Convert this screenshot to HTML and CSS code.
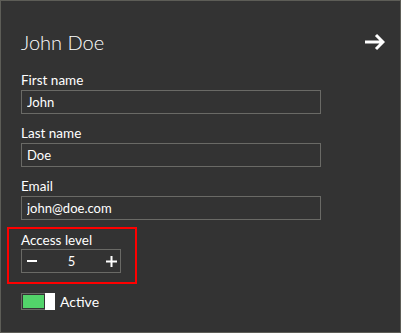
FILE: index.html
```html
<!DOCTYPE html>
<html>
	<head>
		<title>John Doe</title>
		<meta charset="utf-8">
		<link rel="stylesheet" href="styles.css">
	</head>
	<body>
		<div class="page">
			<div class="header">
				<h1 class="title">John Doe</h1>
				<svg class="next" width="20" height="18" viewBox="0 0 20 18">
					<path d="M0 9H18M11 2L18 9L11 16" fill="none" stroke="#fff" stroke-width="3"/>
				</svg>
			</div>

			<div class="field">
				<label for="first">First name</label>
				<input class="box" id="first" type="text" value="John">
			</div>
			<div class="field">
				<label for="last">Last name</label>
				<input class="box" id="last" type="text" value="Doe">
			</div>
			<div class="field">
				<label for="email">Email</label>
				<input class="box" id="email" type="text" value="john@doe.com">
			</div>

			<div class="field marked">
				<label>Access level</label>
				<div class="stepper">
					<button type="button" class="step">
						<svg width="10" height="10" viewBox="0 0 10 10"><path d="M0 5H10" stroke="#fff" stroke-width="2"/></svg>
					</button>
					<span class="value">5</span>
					<button type="button" class="step">
						<svg width="11" height="11" viewBox="0 0 11 11"><path d="M0 5.5H11M5.5 0V11" stroke="#fff" stroke-width="2"/></svg>
					</button>
				</div>
			</div>

			<div class="switch">
				<span class="toggle"><span class="track"><span class="fill"></span></span><span class="thumb"></span></span>
				<span class="switch-label">Active</span>
			</div>
		</div>
	</body>
</html>
```

FILE: styles.css
```css
body,html{margin:0;padding:0;background:#333;}
body{font-family:Lato,"Open Sans",sans-serif;color:#fff;font-size:13px;}

.page{width:401px;height:333px;box-sizing:border-box;border:1px solid #5d5d57;background:#333;padding:29px 15px 0 20px;}

.header{display:flex;justify-content:space-between;align-items:center;margin-bottom:17px;}
.title{margin:0;font-size:20px;line-height:24px;font-weight:300;}
.next{display:block;}

.field{display:flex;flex-direction:column;align-items:flex-start;margin-bottom:10px;}
.field label{line-height:16px;padding-top:1px;margin-bottom:2px;font-size:13.5px;}
.box{width:300px;height:24px;box-sizing:border-box;border:1px solid #6a6a66;background:#333;color:#fff;font:inherit;font-size:13px;padding:0 5px;margin:0;outline:none;}

.marked{width:130px;box-sizing:border-box;border:2px solid #f00;margin:-3px 0 9px -14px;padding:2px 14px 9px 12px;}
.marked label{margin-bottom:1px;}

.stepper{width:100px;height:24px;box-sizing:border-box;border:1px solid #6a6a66;display:flex;align-items:center;justify-content:space-between;padding:0 3px 0 5px;}
.step{background:none;border:0;padding:0;margin:0;display:flex;align-items:center;cursor:pointer;}
.value{font-size:13px;}

.switch{display:flex;align-items:center;gap:5px;}
.toggle{display:flex;width:34px;height:17px;}
.track{flex:1;border:1px solid #6a6a66;border-right:0;padding:1px;display:flex;}
.fill{flex:1;background:#52d36a;}
.thumb{width:10px;background:#fff;}
.switch-label{font-size:14px;line-height:17px;}
```
